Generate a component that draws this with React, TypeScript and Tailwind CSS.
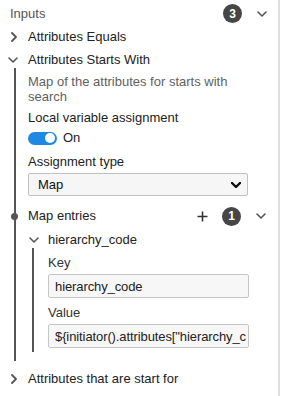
import React from 'react';

const ChevronRight: React.FC = () => (
    <svg width="6" height="10" viewBox="0 0 6 10" fill="none">
        <polyline points="1,1 5,5 1,9" stroke="#555" strokeWidth="1.8" strokeLinecap="round" strokeLinejoin="round" />
    </svg>
);

const ChevronDown: React.FC<{ color?: string; width?: number }> = ({ color = '#555', width = 1.6 }) => (
    <svg width="10" height="6" viewBox="0 0 10 6" fill="none">
        <polyline points="1,1 5,5 9,1" stroke={color} strokeWidth={width} strokeLinecap="round" strokeLinejoin="round" />
    </svg>
);

const Badge: React.FC<{ n: number }> = ({ n }) => (
    <div className="flex h-[19px] w-[19px] items-center justify-center rounded-full bg-[#464646] text-[12px] font-bold leading-none text-white">
        {n}
    </div>
);

const CollapsedRow: React.FC<{ label: string }> = ({ label }) => (
    <div className="flex h-[23px] items-center">
        <div className="flex w-[28px] justify-center pr-[1px]">
            <ChevronRight />
        </div>
        <span className="text-[#222]">{label}</span>
    </div>
);

const Field: React.FC<{ label: string; value: string; first?: boolean }> = ({ label, value, first }) => (
    <div className={first ? '' : 'mt-[7px]'}>
        <div className="leading-[15px] text-[#333]">{label}</div>
        <input
            readOnly
            value={value}
            className="mt-[4px] h-[24px] w-[201px] rounded-[2px] border border-[#c6c6c6] bg-[#f7f7f7] pl-[6px] pr-[1px] text-[13px] tracking-[-0.1px] text-[#222] outline-none"
        />
    </div>
);

export default function App() {
    return (
        <div className="flex h-[396px] w-[281px] bg-white font-['Liberation_Sans',Arial,sans-serif] text-[13px]">
            <div className="flex-1 pt-[2px]">
                {/* Inputs header */}
                <div className="flex h-[23px] items-center pl-[10px] pr-[11px]">
                    <span className="flex-1 text-[#555]">Inputs</span>
                    <Badge n={3} />
                    <div className="ml-[15px]">
                        <ChevronDown />
                    </div>
                </div>

                <CollapsedRow label="Attributes Equals" />

                <div className="flex h-[23px] items-center">
                    <div className="flex w-[28px] justify-center pr-[2px]">
                        <ChevronDown />
                    </div>
                    <span className="text-[#222]">Attributes Starts With</span>
                </div>

                {/* expanded body */}
                <div className="-mt-[3px] flex">
                    <div className="ml-[14px] w-[2px] bg-[#555]" />
                    <div className="ml-[12px] flex-1 pb-[9px] pt-[6px]">
                        <p className="w-[220px] leading-[15px] text-[#5f5f5f]">Map of the attributes for starts with search</p>

                        <div className="mt-[6px] leading-[15px] text-[#222]">Local variable assignment</div>
                        <div className="mt-[6px] flex h-[14px] items-center gap-[6px]">
                            <div className="flex h-[13px] w-[29px] items-center justify-end rounded-full bg-[#1e88e5] pr-[2px]">
                                <div className="h-[10px] w-[10px] rounded-full bg-white" />
                            </div>
                            <span className="text-[#222]">On</span>
                        </div>

                        <div className="mt-[9px] leading-[15px] text-[#222]">Assignment type</div>
                        <div className="mt-[4px] flex h-[23px] w-[220px] items-center justify-between rounded-[2px] border border-[#c0c0c0] bg-[#f6f6f6] pl-[9px] pr-[6px]">
                            <span className="text-[#111]">Map</span>
                            <ChevronDown color="#111" width={2.4} />
                        </div>

                        {/* Map entries */}
                        <div className="relative mt-[10px] flex h-[20px] items-center pr-[12px]">
                            <div className="absolute left-[-17px] top-[7px] h-[7px] w-[7px] rounded-full bg-[#555]" />
                            <span className="flex-1 text-[#222]">Map entries</span>
                            <svg width="11" height="11" viewBox="0 0 11 11">
                                <path d="M5.5 0.5v10M0.5 5.5h10" stroke="#333" strokeWidth="1.6" />
                            </svg>
                            <div className="ml-[14px]">
                                <Badge n={1} />
                            </div>
                            <div className="ml-[15px]">
                                <ChevronDown />
                            </div>
                        </div>

                        <div className="mt-[4px] flex h-[20px] items-center">
                            <div className="flex w-[20px] justify-start pl-[1px]">
                                <ChevronDown />
                            </div>
                            <span className="text-[#222]">hierarchy_code</span>
                        </div>
                        <div className="-mt-[2px] flex">
                            <div className="ml-[4px] w-[2px] bg-[#555]" />
                            <div className="ml-[14px] pb-[4px] pt-[7px]">
                                <Field first label="Key" value="hierarchy_code" />
                                <Field label="Value" value={'${initiator().attributes["hierarchy_c'} />
                            </div>
                        </div>
                    </div>
                </div>

                <div className="mt-[6px]">
                    <CollapsedRow label="Attributes that are start for" />
                </div>
            </div>
            <div className="w-[2px] bg-[#dedede]" />
            <div className="w-[1px]" />
        </div>
    );
}
